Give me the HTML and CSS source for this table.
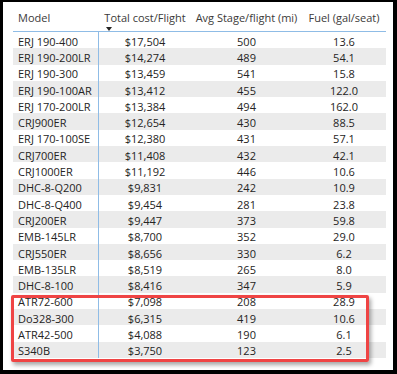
FILE: index.html
```html
<!DOCTYPE html>
<html>
<head>
<meta charset="utf-8">
<link rel="stylesheet" href="styles.css">
</head>
<body>
<div class="panel">
  <div class="table">
    <div class="hdr c1"><span>Model</span></div>
    <div class="hdr c2"><span class="sorted">Total cost/Flight<i class="arrow"></i></span></div>
    <div class="hdr c3"><span>Avg Stage/flight (mi)</span></div>
    <div class="hdr c4"><span>Fuel (gal/seat)</span></div>

    <div class="row"><div class="c1">ERJ 190-400</div><div class="c2">$17,504</div><div class="c3">500</div><div class="c4">13.6</div></div>
    <div class="row alt"><div class="c1">ERJ 190-200LR</div><div class="c2">$14,274</div><div class="c3">489</div><div class="c4">54.1</div></div>
    <div class="row"><div class="c1">ERJ 190-300</div><div class="c2">$13,459</div><div class="c3">541</div><div class="c4">15.8</div></div>
    <div class="row alt"><div class="c1">ERJ 190-100AR</div><div class="c2">$13,412</div><div class="c3">455</div><div class="c4">122.0</div></div>
    <div class="row"><div class="c1">ERJ 170-200LR</div><div class="c2">$13,384</div><div class="c3">494</div><div class="c4">162.0</div></div>
    <div class="row alt"><div class="c1">CRJ900ER</div><div class="c2">$12,654</div><div class="c3">430</div><div class="c4">88.5</div></div>
    <div class="row"><div class="c1">ERJ 170-100SE</div><div class="c2">$12,380</div><div class="c3">431</div><div class="c4">57.1</div></div>
    <div class="row alt"><div class="c1">CRJ700ER</div><div class="c2">$11,408</div><div class="c3">432</div><div class="c4">42.1</div></div>
    <div class="row"><div class="c1">CRJ1000ER</div><div class="c2">$11,192</div><div class="c3">446</div><div class="c4">10.6</div></div>
    <div class="row alt"><div class="c1">DHC-8-Q200</div><div class="c2">$9,831</div><div class="c3">242</div><div class="c4">10.9</div></div>
    <div class="row"><div class="c1">DHC-8-Q400</div><div class="c2">$9,454</div><div class="c3">281</div><div class="c4">23.8</div></div>
    <div class="row alt"><div class="c1">CRJ200ER</div><div class="c2">$9,447</div><div class="c3">373</div><div class="c4">59.8</div></div>
    <div class="row"><div class="c1">EMB-145LR</div><div class="c2">$8,700</div><div class="c3">352</div><div class="c4">29.0</div></div>
    <div class="row alt"><div class="c1">CRJ550ER</div><div class="c2">$8,656</div><div class="c3">330</div><div class="c4">6.2</div></div>
    <div class="row"><div class="c1">EMB-135LR</div><div class="c2">$8,519</div><div class="c3">265</div><div class="c4">8.0</div></div>
    <div class="row alt"><div class="c1">DHC-8-100</div><div class="c2">$8,416</div><div class="c3">347</div><div class="c4">5.9</div></div>
    <div class="row"><div class="c1">ATR72-600</div><div class="c2">$7,098</div><div class="c3">208</div><div class="c4">28.9</div></div>
    <div class="row alt"><div class="c1">Do328-300</div><div class="c2">$6,315</div><div class="c3">419</div><div class="c4">10.6</div></div>
    <div class="row"><div class="c1">ATR42-500</div><div class="c2">$4,088</div><div class="c3">190</div><div class="c4">6.1</div></div>
    <div class="row alt"><div class="c1">S340B</div><div class="c2">$3,750</div><div class="c3">123</div><div class="c4">2.5</div></div>
  </div>
  <div class="highlight"></div>
</div>
</body>
</html>
```

FILE: styles.css
```css
html, body {
  margin: 0;
  padding: 0;
  background: #000;
}
body {
  width: 397px;
  height: 374px;
  overflow: hidden;
}
.panel {
  position: relative;
  margin: 2px 4px 0 3px;
  width: 390px;
  height: 368px;
  background: #fff;
  box-sizing: border-box;
  padding-left: 10px;
  font-family: "Open Sans", sans-serif;
  font-size: 11px;
  color: #252423;
}
.table {
  display: grid;
  grid-template-columns: 86px 92px 111px 84px;
  grid-template-rows: 30px;
  grid-auto-rows: 16.3px;
  width: 373px;
}
.row {
  display: contents;
}
.row > div {
  display: flex;
  align-items: center;
  justify-content: center;
  white-space: nowrap;
  padding-top: 2px;
  box-sizing: border-box;
}
.row.alt > div {
  background: #ebebeb;
}
.row > .c1 {
  justify-content: flex-start;
  padding-left: 5px;
  border-right: 1px solid #8fbce6;
}
.hdr {
  display: flex;
  align-items: flex-start;
  justify-content: center;
  padding-top: 8px;
  box-sizing: border-box;
  border-bottom: 1px solid #8fbce6;
  white-space: nowrap;
  color: #3b3a39;
}
.hdr.c1 {
  justify-content: flex-start;
  padding-left: 5px;
}
.sorted {
  position: relative;
}
.arrow {
  position: absolute;
  left: 2px;
  top: 17px;
  width: 0;
  height: 0;
  border-left: 3.5px solid transparent;
  border-right: 3.5px solid transparent;
  border-top: 4px solid #252423;
}
.highlight {
  position: absolute;
  left: 8px;
  top: 293px;
  width: 358px;
  height: 67px;
  box-sizing: border-box;
  border: 3px solid #ef4444;
  border-radius: 2px;
  box-shadow: 2px 3px 4px rgba(0,0,0,0.35);
}
```
